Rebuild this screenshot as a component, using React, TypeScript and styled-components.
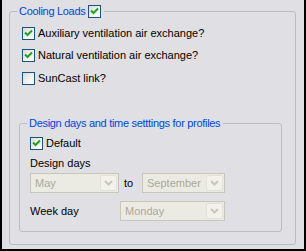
import React from "react";
import styled, { createGlobalStyle } from "styled-components";

const GlobalStyle = createGlobalStyle`
  html, body {
    margin: 0;
    padding: 0;
    background: #e0dfe3;
  }
  * {
    box-sizing: border-box;
  }
`;

const Panel = styled.div`
  width: 306px;
  height: 251px;
  background: #e0dfe3;
  border-left: 2px solid #000;
  border-right: 2px solid #000;
  border-bottom: 2px solid #000;
  font-family: "Liberation Sans", Arial, sans-serif;
  font-size: 11px;
  line-height: 13px;
  color: #000;
  padding-top: 4px;
`;

const Group = styled.fieldset<{ $inner?: boolean }>`
  margin: ${p => (p.$inner ? "31px 0 0 0" : "0 0 0 7px")};
  width: ${p => (p.$inner ? "263px" : "287px")};
  border: 1px solid #bdbcc2;
  border-radius: 3px;
  padding: ${p => (p.$inner ? "0 10px 10px 10px" : "0 13px 12px 9px")};
  min-width: 0;
  display: flex;
  flex-direction: column;
`;

const Legend = styled.legend<{ $inner?: boolean }>`
  display: flex;
  align-items: center;
  gap: 3px;
  height: ${p => (p.$inner ? "14px" : "15px")};
  margin-left: ${p => (p.$inner ? "-3px" : "-2px")};
  padding: 0 3px 0 2px;
  color: #0046d5;
  letter-spacing: -0.3px;
`;

const CheckRow = styled.label<{ $top: number; $indent?: number }>`
  display: flex;
  align-items: center;
  gap: 3px;
  height: 13px;
  margin-top: ${p => p.$top}px;
  margin-left: ${p => p.$indent ?? 0}px;
  white-space: nowrap;
`;

const Box = styled.span`
  flex: none;
  width: 13px;
  height: 13px;
  border: 1px solid #1c5180;
  background: linear-gradient(135deg, #dcdcd7 0%, #f4f4f0 60%, #ffffff 100%);
  display: flex;
  align-items: center;
  justify-content: center;
`;

const FieldLabel = styled.div<{ $top: number }>`
  margin-top: ${p => p.$top}px;
  height: 13px;
`;

const ComboRow = styled.div<{ $top: number }>`
  display: flex;
  align-items: center;
  height: 20px;
  margin-top: ${p => p.$top}px;
`;

const Between = styled.span`
  width: 23px;
  padding-left: 5px;
`;

const RowLabel = styled.span`
  width: 90px;
`;

const Combo = styled.div<{ $w: number }>`
  width: ${p => p.$w}px;
  height: 20px;
  border: 1px solid #c9c7ba;
  background: #ebebe4;
  display: flex;
  align-items: center;
  padding: 1px;
  color: #aca899;
`;

const ComboText = styled.span`
  flex: 1;
  padding-left: 3px;
`;

const ComboButton = styled.span`
  width: 17px;
  height: 16px;
  border: 1px solid #e3e2da;
  border-radius: 2px;
  background: #f2f1eb;
  display: flex;
  align-items: center;
  justify-content: center;
`;

const Check = ({ on }: { on: boolean }) => (
  <Box>
    {on && (
      <svg width="9" height="9" viewBox="0 0 9 9">
        <path d="M1 3.5 L3.5 6 L8 1.5" stroke="#21a121" strokeWidth="2" fill="none" />
      </svg>
    )}
  </Box>
);

const Chevron = () => (
  <svg width="9" height="6" viewBox="0 0 9 6">
    <path d="M1 1 L4.5 4.5 L8 1" stroke="#c9c7ba" strokeWidth="2" fill="none" />
  </svg>
);

const Select = ({ w, value }: { w: number; value: string }) => (
  <Combo $w={w}>
    <ComboText>{value}</ComboText>
    <ComboButton>
      <Chevron />
    </ComboButton>
  </Combo>
);

const options = [
  { name: "Auxiliary ventilation air exchange?", on: true, top: 8 },
  { name: "Natural ventilation air exchange?", on: true, top: 9 },
  { name: "SunCast link?", on: false, top: 10 },
];

export default function App() {
  return (
    <>
      <GlobalStyle />
      <Panel>
        <Group>
          <Legend>
            Cooling Loads
            <Check on />
          </Legend>
          {options.map(o => (
            <CheckRow key={o.name} $top={o.top} $indent={3}>
              <Check on={o.on} />
              {o.name}
            </CheckRow>
          ))}
          <Group $inner>
            <Legend $inner>Design days and time setttings for profiles</Legend>
            <CheckRow $top={7}>
              <Check on />
              Default
            </CheckRow>
            <FieldLabel $top={7}>Design days</FieldLabel>
            <ComboRow $top={3}>
              <Select w={89} value="May" />
              <Between>to</Between>
              <Select w={83} value="September" />
            </ComboRow>
            <ComboRow $top={8}>
              <RowLabel>Week day</RowLabel>
              <Select w={105} value="Monday" />
            </ComboRow>
          </Group>
        </Group>
      </Panel>
    </>
  );
}
